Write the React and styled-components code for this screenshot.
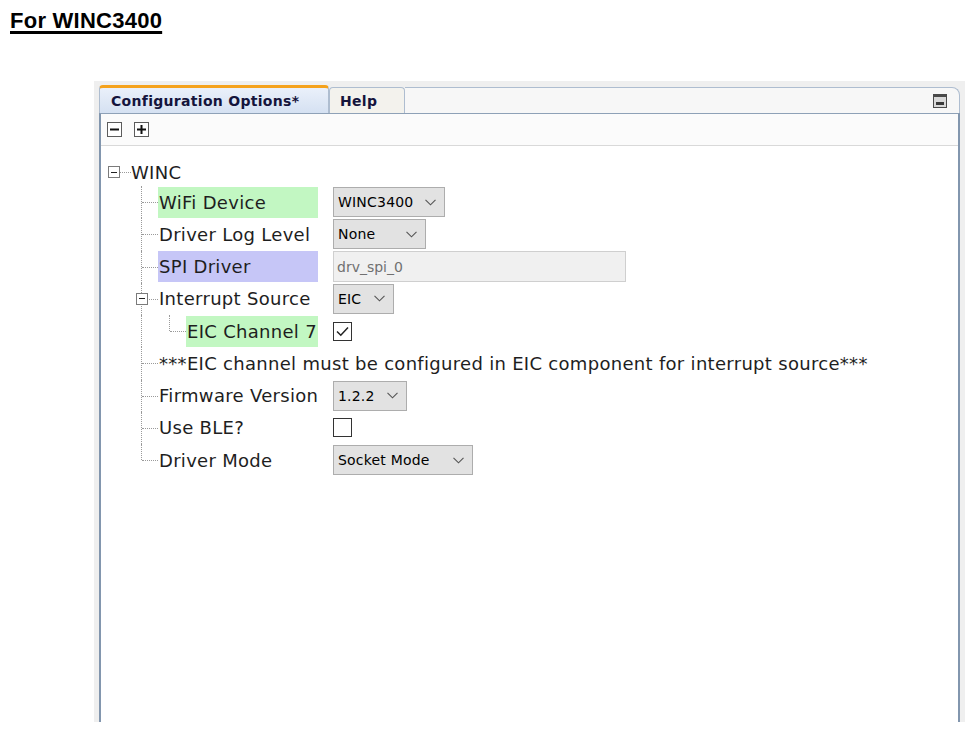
import React from "react";
import styled, { createGlobalStyle } from "styled-components";

const Global = createGlobalStyle`
  html, body { margin: 0; padding: 0; background: #ffffff; }
  body { font-family: "DejaVu Sans", Verdana, sans-serif; overflow: hidden; }
`;

const Page = styled.div`
  width: 969px;
  height: 733px;
  background: #fff;
`;

const Title = styled.h1`
  margin: 0;
  padding: 8px 0 0 10px;
  font-family: "Liberation Sans", Arial, sans-serif;
  font-weight: 700;
  font-size: 22px;
  line-height: 26px;
  letter-spacing: 0.25px;
  color: #000;
  text-decoration: underline;
  text-decoration-thickness: 3px;
  text-underline-offset: 3px;
`;

const Panel = styled.div`
  margin: 47px 0 0 94px;
  width: 871px;
  height: 641px;
  box-sizing: border-box;
  background: #efefef;
  padding: 4px 5px 0;
  display: flex;
  flex-direction: column;
`;

const TabStrip = styled.div`
  display: flex;
  align-items: flex-end;
  height: 28px;
`;

const Tab = styled.div`
  box-sizing: border-box;
  width: ${(p) => p.$w}px;
  height: ${(p) => (p.$active ? 28 : 26)}px;
  display: flex;
  align-items: center;
  padding-left: ${(p) => p.$pad}px;
  font-family: "DejaVu Sans", Tahoma, sans-serif;
  font-weight: 700;
  font-size: 14px;
  letter-spacing: 0.3px;
  color: #14143c;
  border: 1px solid #aebdd0;
  border-bottom: none;
  border-top: ${(p) => (p.$active ? "3px solid #f5a21c" : "1px solid #aebdd0")};
  border-radius: 4px 4px 0 0;
  background: ${(p) =>
    p.$active ? "linear-gradient(#eaf0fa, #d5e1f2)" : "#f3f2ed"};
`;

const TabFiller = styled.div`
  flex: 1;
  height: 26px;
  box-sizing: border-box;
  border-top: 1px solid #aebdd0;
  border-right: 1px solid #aebdd0;
  border-top-right-radius: 8px;
  background: #f7f7f7;
  display: flex;
  align-items: center;
  justify-content: flex-end;
  padding-right: 12px;
`;

const Frame = styled.div`
  flex: 1;
  display: flex;
  flex-direction: column;
  background: #fff;
  border-top: 1px solid #8ea1b7;
  border-left: 2px solid #8296ae;
  border-right: 2px solid #8296ae;
`;

const Toolbar = styled.div`
  height: 32px;
  box-sizing: border-box;
  display: flex;
  align-items: flex-start;
  gap: 12px;
  padding: 8px 0 0 6px;
  background: #fbfbfb;
  border-bottom: 1px solid #d9d9d9;
`;

const ToolButton = styled.div`
  width: 15px;
  height: 15px;
  box-sizing: border-box;
  border: 1px solid #5c5c5c;
  background: #fff;
  display: flex;
  align-items: center;
  justify-content: center;
`;

const Tree = styled.div`
  padding-top: 12px;
  display: flex;
  flex-direction: column;
`;

const RootRow = styled.div`
  height: 28px;
  display: flex;
  align-items: center;
  padding-left: 7px;
`;

const Expander = styled.div`
  width: 12px;
  height: 12px;
  box-sizing: border-box;
  border: 1px solid #7b7b7b;
  background: #fff;
  display: flex;
  align-items: center;
  justify-content: center;
  &::after {
    content: "";
    width: 6px;
    height: 1px;
    background: #222;
  }
`;

const Stub = styled.div`
  width: ${(p) => p.$w}px;
  border-top: 1px dotted #9a9a9a;
`;

const RootLabel = styled.span`
  font-size: 18px;
  letter-spacing: 0.3px;
  color: #1e1e1e;
`;

const Row = styled.div`
  height: 32.25px;
  display: flex;
  align-items: center;
`;

const Spacer = styled.div`
  width: ${(p) => p.$w}px;
  align-self: stretch;
  flex-shrink: 0;
`;

const Pass = styled.div`
  width: 28px;
  align-self: stretch;
  flex-shrink: 0;
  border-left: 1px dotted #9a9a9a;
  box-sizing: border-box;
`;

const Branch = styled.div`
  position: relative;
  width: 17px;
  align-self: stretch;
  flex-shrink: 0;
  &::before {
    content: "";
    position: absolute;
    left: 0;
    top: 0;
    height: ${(p) => (p.$last ? "50%" : "100%")};
    border-left: 1px dotted #9a9a9a;
  }
  &::after {
    content: "";
    position: absolute;
    left: 1px;
    right: 0;
    top: 50%;
    border-top: 1px dotted #9a9a9a;
  }
`;

const BranchExpander = styled(Expander)`
  position: absolute;
  left: -5px;
  top: calc(50% - 6px);
  z-index: 1;
`;

const Label = styled.div`
  box-sizing: border-box;
  width: ${(p) => (p.$w ? `${p.$w}px` : "auto")};
  height: 31px;
  display: flex;
  align-items: center;
  padding-left: 1px;
  font-size: 18px;
  letter-spacing: 0.3px;
  color: #1e1e1e;
  white-space: nowrap;
  background: ${(p) => p.$bg || "transparent"};
`;

const Control = styled.div`
  margin-left: 15px;
  display: flex;
  align-items: center;
`;

const Combo = styled.div`
  box-sizing: border-box;
  width: ${(p) => p.$w}px;
  height: 30px;
  display: flex;
  align-items: center;
  justify-content: space-between;
  padding: 0 8px 0 4px;
  border: 1px solid #adadad;
  background: #e2e2e2;
  font-family: "DejaVu Sans", Tahoma, sans-serif;
  font-size: 14px;
  letter-spacing: 0.2px;
  color: #000;
`;

const TextField = styled.div`
  box-sizing: border-box;
  width: 293px;
  height: 31px;
  display: flex;
  align-items: center;
  padding-left: 3px;
  border: 1px solid #cfcfcf;
  background: #f0f0f0;
  font-family: "DejaVu Sans", Tahoma, sans-serif;
  font-size: 14px;
  color: #707070;
`;

const Check = styled.div`
  width: 19px;
  height: 19px;
  box-sizing: border-box;
  border: 1px solid #333;
  background: #fff;
  display: flex;
  align-items: center;
  justify-content: center;
`;

const Chevron = () => (
  <svg width="11" height="7" viewBox="0 0 11 7">
    <polyline points="0.5,0.8 5.5,5.8 10.5,0.8" fill="none" stroke="#555" strokeWidth="1.1" />
  </svg>
);

const Minimize = () => (
  <svg width="14" height="14" viewBox="0 0 14 14">
    <rect x="0.5" y="0.5" width="13" height="13" fill="#d9d9d9" stroke="#4a4a4a" />
    <rect x="1" y="1" width="12" height="2" fill="#4a4a4a" />
    <rect x="3" y="8" width="8" height="3" fill="#3a3a3a" />
  </svg>
);

const Green = "#c2f7c2";
const Lavender = "#c6c6f7";

function ComboBox({ w, value }) {
  return (
    <Combo $w={w}>
      <span>{value}</span>
      <Chevron />
    </Combo>
  );
}

function CheckBox({ checked }) {
  return (
    <Check>
      {checked && (
        <svg width="13" height="11" viewBox="0 0 13 11">
          <polyline points="1,5.5 4.8,9.2 12,1.5" fill="none" stroke="#222" strokeWidth="1.5" />
        </svg>
      )}
    </Check>
  );
}

const rows = [
  { label: "WiFi Device", bg: Green, control: <ComboBox w={112} value="WINC3400" /> },
  { label: "Driver Log Level", control: <ComboBox w={93} value="None" /> },
  { label: "SPI Driver", bg: Lavender, control: <TextField>drv_spi_0</TextField> },
  { label: "Interrupt Source", expander: true, control: <ComboBox w={61} value="EIC" /> },
  { label: "EIC Channel 7", bg: Green, depth: 2, control: <CheckBox checked /> },
  { label: "***EIC channel must be configured in EIC component for interrupt source***", note: true },
  { label: "Firmware Version", control: <ComboBox w={74} value="1.2.2" /> },
  { label: "Use BLE?", control: <CheckBox /> },
  { label: "Driver Mode", last: true, control: <ComboBox w={140} value="Socket Mode" /> },
];

export default function App() {
  return (
    <Page>
      <Global />
      <Title>For WINC3400</Title>
      <Panel>
        <TabStrip>
          <Tab $active $w={230} $pad={11}>Configuration Options*</Tab>
          <Tab $w={76} $pad={10}>Help</Tab>
          <TabFiller>
            <Minimize />
          </TabFiller>
        </TabStrip>
        <Frame>
          <Toolbar>
            <ToolButton>
              <svg width="9" height="9" viewBox="0 0 9 9">
                <rect x="0" y="3.5" width="9" height="2" fill="#111" />
              </svg>
            </ToolButton>
            <ToolButton>
              <svg width="9" height="9" viewBox="0 0 9 9">
                <rect x="0" y="3.5" width="9" height="2" fill="#111" />
                <rect x="3.5" y="0" width="2" height="9" fill="#111" />
              </svg>
            </ToolButton>
          </Toolbar>
          <Tree>
            <RootRow>
              <Expander />
              <Stub $w={11} />
              <RootLabel>WINC</RootLabel>
            </RootRow>
            {rows.map((r) => (
              <Row key={r.label}>
                <Spacer $w={40} />
                {r.depth === 2 && <Pass />}
                {r.depth === 2 ? (
                  <Branch $last />
                ) : (
                  <Branch $last={r.last}>
                    {r.expander && <BranchExpander />}
                  </Branch>
                )}
                <Label $w={r.note ? 0 : r.depth === 2 ? 132 : 160} $bg={r.bg}>
                  {r.label}
                </Label>
                {r.control && <Control>{r.control}</Control>}
              </Row>
            ))}
          </Tree>
        </Frame>
      </Panel>
    </Page>
  );
}
